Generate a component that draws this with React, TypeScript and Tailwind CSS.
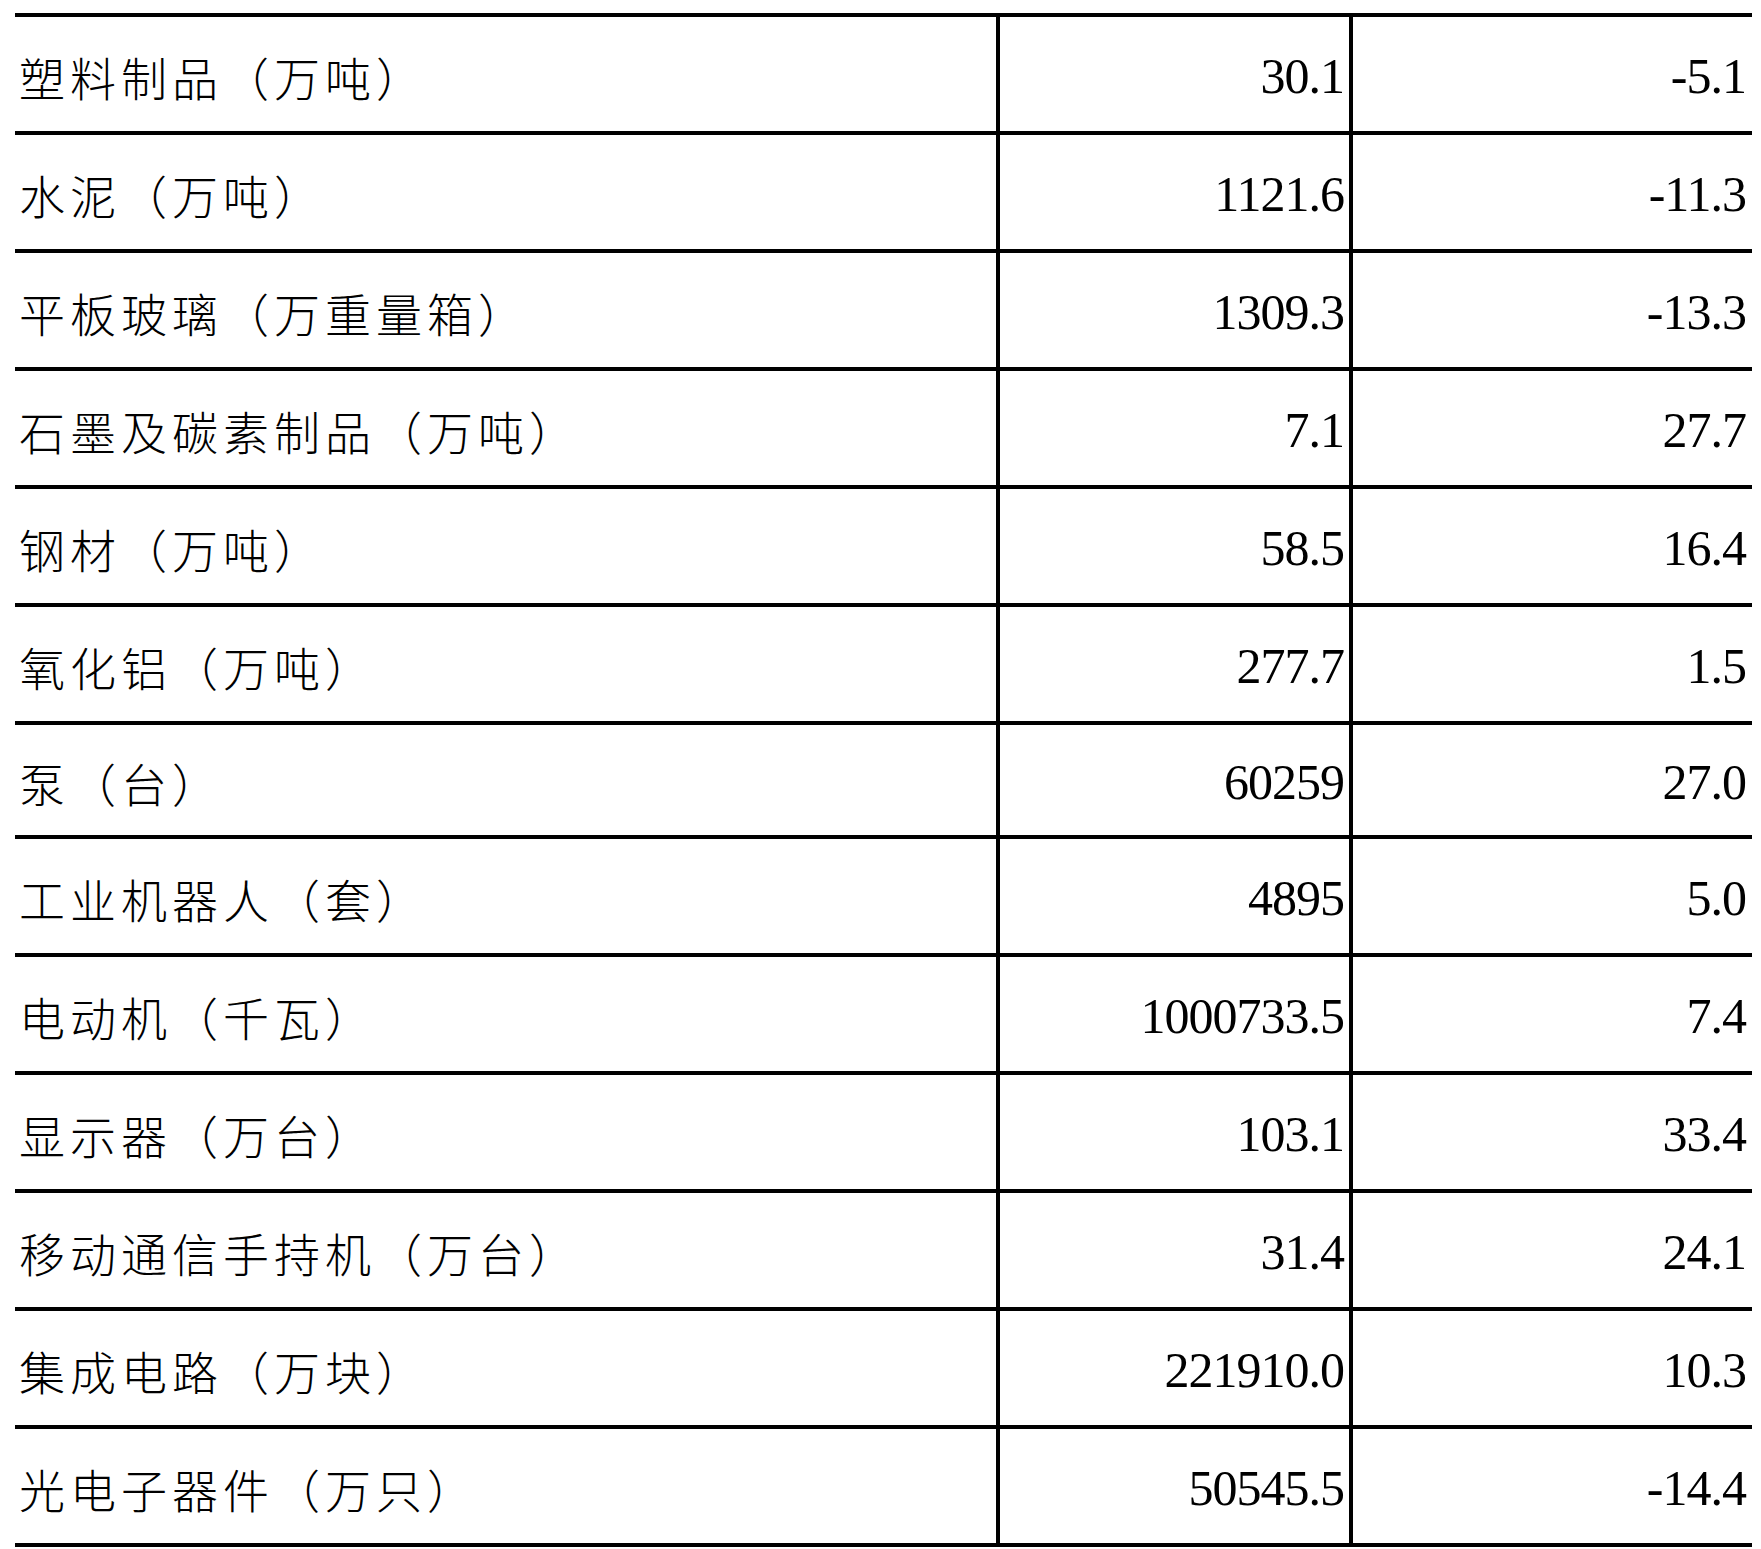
import React from "react";

const rows: { name: string; value: string; change: string; short?: boolean }[] = [
  { name: "塑料制品（万吨）", value: "30.1", change: "-5.1" },
  { name: "水泥（万吨）", value: "1121.6", change: "-11.3" },
  { name: "平板玻璃（万重量箱）", value: "1309.3", change: "-13.3" },
  { name: "石墨及碳素制品（万吨）", value: "7.1", change: "27.7" },
  { name: "钢材（万吨）", value: "58.5", change: "16.4" },
  { name: "氧化铝（万吨）", value: "277.7", change: "1.5" },
  { name: "泵（台）", value: "60259", change: "27.0", short: true },
  { name: "工业机器人（套）", value: "4895", change: "5.0" },
  { name: "电动机（千瓦）", value: "1000733.5", change: "7.4" },
  { name: "显示器（万台）", value: "103.1", change: "33.4" },
  { name: "移动通信手持机（万台）", value: "31.4", change: "24.1" },
  { name: "集成电路（万块）", value: "221910.0", change: "10.3" },
  { name: "光电子器件（万只）", value: "50545.5", change: "-14.4" },
];

export default function App() {
  return (
    <div className="w-[1761px] h-[1549px] bg-white pt-[13px] pl-[15px]">
      <div className="w-[1737px] border-t-[4px] border-black flex flex-col">
        {rows.map((r) => (
          <div
            key={r.name}
            className={
              "grid grid-cols-[985px_353px_399px] border-b-[4px] border-black " +
              (r.short ? "h-[114px]" : "h-[118px]")
            }
          >
            <div className="border-r-[4px] border-black flex items-center pl-[4px] pt-[4px]">
              <span
                className="text-[46px] leading-none tracking-[5px] text-black font-light [text-spacing-trim:space-all]"
                style={{ fontFamily: '"Noto Sans CJK SC", "Noto Sans CJK JP", sans-serif' }}
              >
                {r.name}
              </span>
            </div>
            <div className="border-r-[4px] border-black flex items-center justify-end pr-[5px] pt-[4px]">
              <span
                className="text-[50px] leading-none tracking-[-1px] text-black"
                style={{ fontFamily: '"Liberation Serif", "Times New Roman", serif' }}
              >
                {r.value}
              </span>
            </div>
            <div className="flex items-center justify-end pr-[6px] pt-[4px]">
              <span
                className="text-[50px] leading-none tracking-[-1px] text-black"
                style={{ fontFamily: '"Liberation Serif", "Times New Roman", serif' }}
              >
                {r.change}
              </span>
            </div>
          </div>
        ))}
      </div>
    </div>
  );
}
